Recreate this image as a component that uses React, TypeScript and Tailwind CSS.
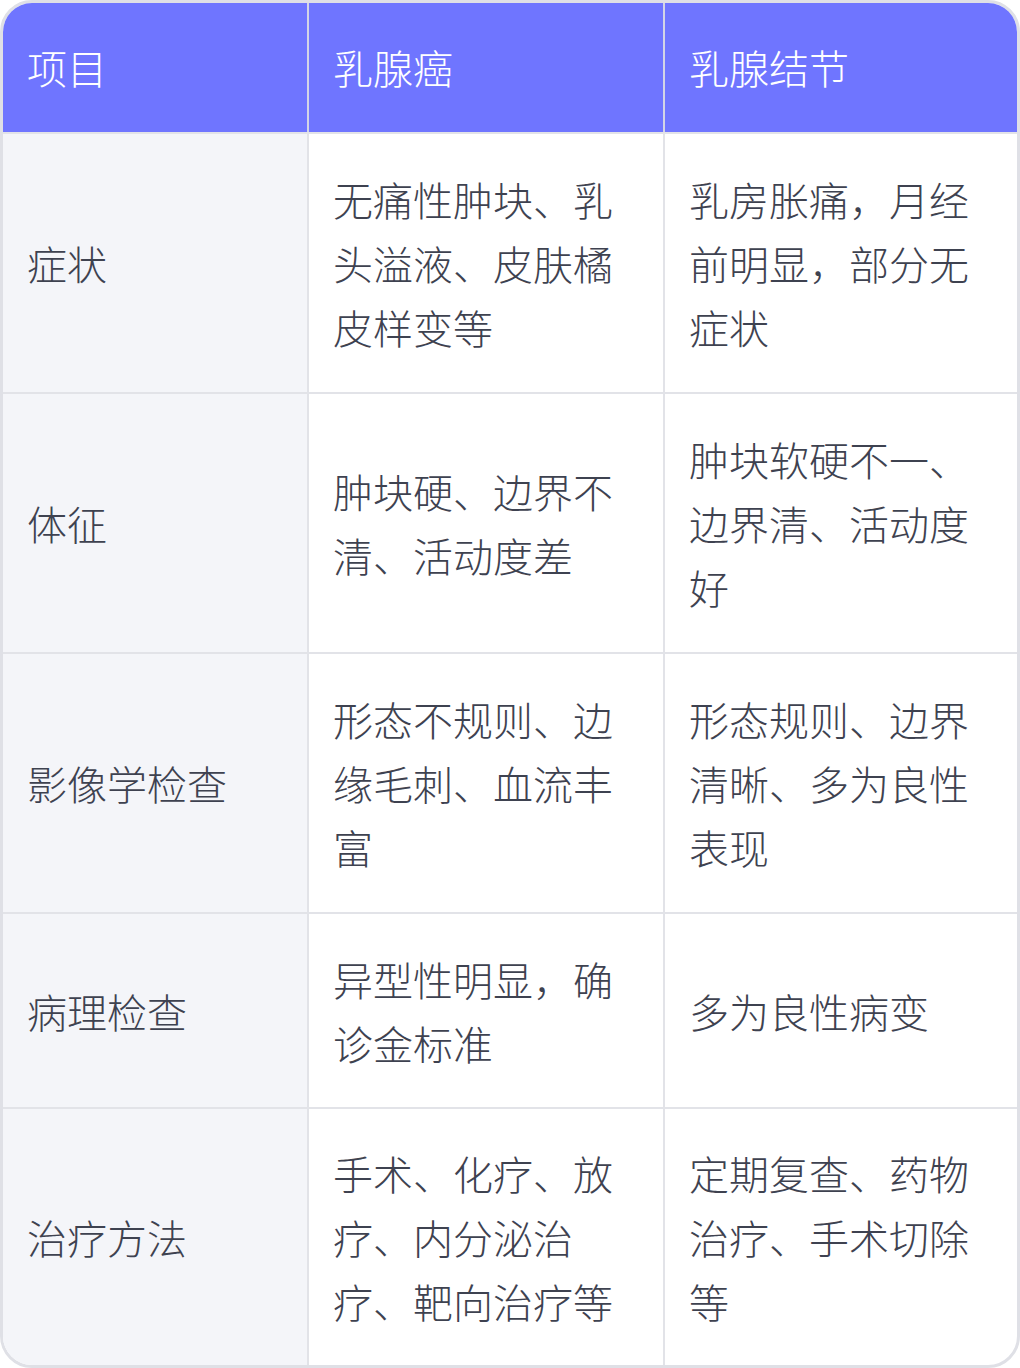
const headers = ["项目", "乳腺癌", "乳腺结节"];

const rows = [
  ["症状", "无痛性肿块、乳头溢液、皮肤橘皮样变等", "乳房胀痛，月经前明显，部分无症状"],
  ["体征", "肿块硬、边界不清、活动度差", "肿块软硬不一、边界清、活动度好"],
  ["影像学检查", "形态不规则、边缘毛刺、血流丰富", "形态规则、边界清晰、多为良性表现"],
  ["病理检查", "异型性明显，确诊金标准", "多为良性病变"],
  ["治疗方法", "手术、化疗、放疗、内分泌治疗、靶向治疗等", "定期复查、药物治疗、手术切除等"],
];

const font = { fontFamily: '"Noto Sans CJK SC", "Noto Sans", sans-serif' };

// padding per body row, tuned so row lines land where the screenshot has them
const pads = [
  "pt-[33px] pb-[33px]",
  "pt-[33px] pb-[33px]",
  "pt-[33px] pb-[33px]",
  "pt-[33px] pb-[32px]",
  "pt-[32px] pb-[32px]",
];

export default function App() {
  return (
    <div className="w-[1020px] h-[1368px] bg-white font-light" style={font}>
      <div className="overflow-hidden rounded-[32px] border-[3px] border-[#dfe0e6]">
        <div className="grid grid-cols-[304px_356px_1fr] bg-[#6f75ff] text-white">
          {headers.map((h, i) => (
            <div
              key={h}
              className={`px-6 pt-[32px] pb-[33px] text-[40px] leading-[64px] ${
                i > 0 ? "border-l-2 border-[#d3d5e6]" : ""
              }`}
            >
              {h}
            </div>
          ))}
        </div>
        {rows.map((r, idx) => (
          <div
            key={r[0]}
            className="grid grid-cols-[304px_356px_1fr] border-t-2 border-[#e2e3e8] text-[#3e4250]"
          >
            <div className={`flex items-center bg-[#f4f5f9] px-6 ${pads[idx]} text-[40px] leading-[64px]`}>
              {r[0]}
            </div>
            <div className={`flex items-center border-l-2 border-[#e2e3e8] px-6 ${pads[idx]} text-[40px] leading-[64px]`}>
              {r[1]}
            </div>
            <div className={`flex items-center border-l-2 border-[#e2e3e8] px-6 ${pads[idx]} text-[40px] leading-[64px]`}>
              {r[2]}
            </div>
          </div>
        ))}
      </div>
    </div>
  );
}
